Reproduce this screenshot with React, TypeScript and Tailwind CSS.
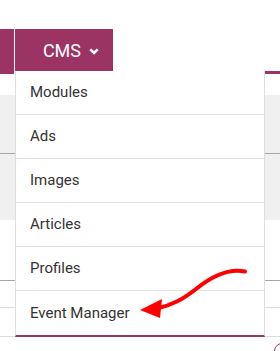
import React from "react";

const items = ["Modules", "Ads", "Images", "Articles", "Profiles", "Event Manager"];

export default function App() {
  return (
    <div className="relative w-[280px] h-[351px] overflow-hidden bg-white" style={{ fontFamily: "Roboto, 'Liberation Sans', sans-serif" }}>
      <div className="h-[29px]" />
      <div className="flex h-[45px]">
        <div className="w-[14px] bg-[#9b3462]" />
        <div className="w-px bg-white" />
        <div className="w-[98px] h-[42px] bg-[#9b3462] flex items-center justify-end pr-[14px] gap-[8px] text-white text-[18px]">
          <span>CMS</span>
          <svg width="10" height="7" viewBox="0 0 10 7" className="mt-[2px]">
            <path d="M1.3 1.3 L5 5 L8.7 1.3" stroke="white" strokeWidth="2.6" fill="none" />
          </svg>
        </div>
        <div className="flex-1 flex flex-col justify-end">
          <div className="h-[3px] bg-[#9b3462]" />
        </div>
      </div>
      <div className="h-[21px]" />
      <div className="h-[125px] bg-[#f0f0f0] flex flex-col">
        <div className="h-[58px]" />
        <div className="h-px bg-[#a8a8a8]" />
      </div>
      <div className="flex flex-col">
        <div className="h-[60px]" />
        <div className="h-px bg-[#a8a8a8]" />
        <div className="h-[26px]" />
        <div className="h-px bg-[#dcdcdc]" />
        <div className="h-[28px]" />
        <div className="h-px bg-[#dcdcdc]" />
      </div>
      <div className="absolute left-[274px] top-[343px] w-[16px] h-[16px] rounded-full border-[1.5px] border-[#9b3462]" />

      <div className="absolute left-[15px] top-[71px] w-[250px] bg-white border-l border-r border-[#dedede] border-b-2 border-b-[#9b3462]">
        {items.map((t, i) => (
          <div
            key={t}
            className={`h-[44px] flex items-center pl-[14px] text-[15px] text-[#333] ${i < items.length - 1 ? "border-b border-[#e3e3e3]" : ""}`}
          >
            {t}
          </div>
        ))}
      </div>

      <svg className="absolute left-0 top-0" width="280" height="351" viewBox="0 0 280 351">
        <path d="M245 271.5 C 228 268, 212 276, 196 289 C 182 300, 172 305, 157 308.5" stroke="#ff0000" strokeWidth="4" fill="none" strokeLinecap="round" />
        <polygon points="140,310 162,299 160,318" fill="#ff0000" />
      </svg>
    </div>
  );
}
